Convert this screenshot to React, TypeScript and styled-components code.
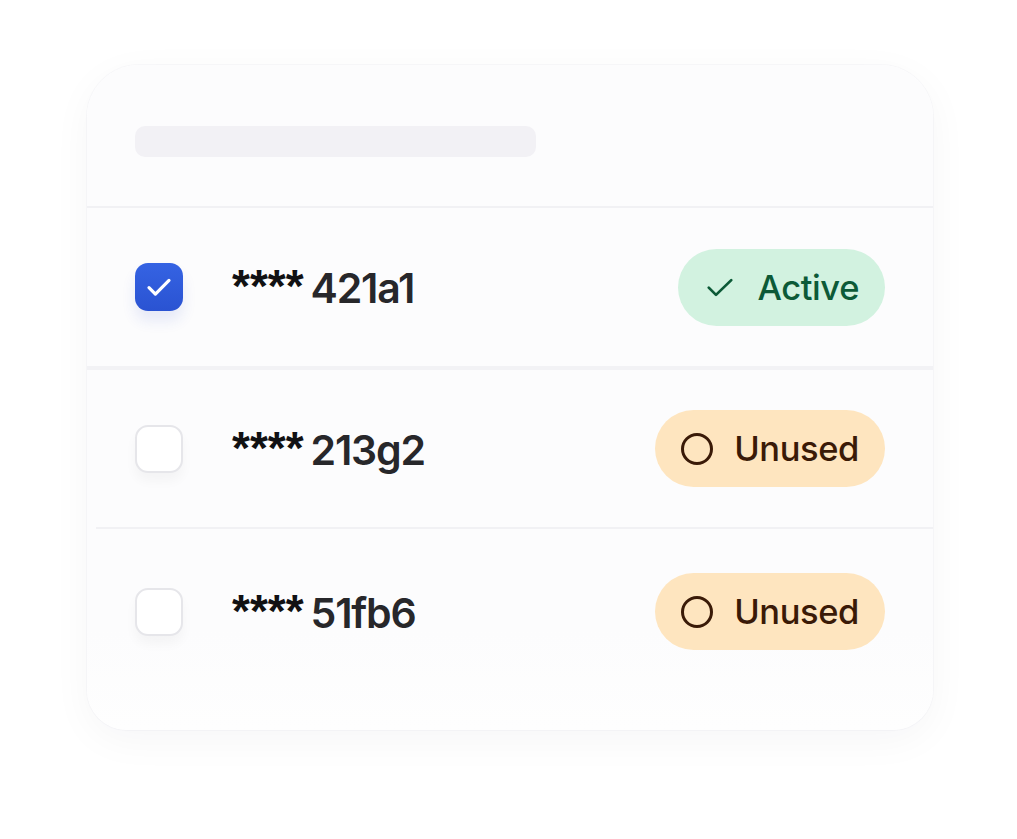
import React from "react";
import styled, { createGlobalStyle } from "styled-components";

const Global = createGlobalStyle`
  html, body { margin: 0; padding: 0; background: #ffffff; }
  body { font-family: "Inter", "Liberation Sans", sans-serif; }
`;

const Page = styled.div`
  width: 1017px;
  height: 839px;
  padding: 65px 0 0 87px;
  box-sizing: border-box;
  background: #ffffff;
`;

const Card = styled.div`
  width: 846px;
  height: 665px;
  box-sizing: border-box;
  border-radius: 52px 52px 40px 40px;
  background: linear-gradient(to bottom, #fcfcfd 0%, #fcfcfd 85%, #fefefe 100%);
  box-shadow: 0 10px 40px rgba(30, 30, 60, 0.04), 0 0 0 1px rgba(242, 242, 246, 0.45);
  display: flex;
  flex-direction: column;
  overflow: hidden;
`;

const Header = styled.div`
  height: 143px;
  flex: 0 0 143px;
  padding: 61px 48px 0;
  box-sizing: border-box;
  border-bottom: 2px solid #f1f1f4;
`;

const Placeholder = styled.div`
  width: 401px;
  height: 31px;
  border-radius: 10px;
  background: #f2f1f5;
`;

type Divider = "full" | "inset" | "none";

const Row = styled.div<{ $divider: Divider }>`
  flex: 0 0 auto;
  display: flex;
  align-items: center;
  box-sizing: border-box;
  position: relative;
  ${(p) =>
    p.$divider === "full"
      ? `height: 162px; padding: 0 48px; border-bottom: 4px solid #f2f2f5;`
      : p.$divider === "inset"
      ? `height: 159px; padding: 0 48px 2px;
         &::after { content: ""; position: absolute; left: 9px; right: 0; bottom: 0; height: 2px; background: #f1f1f4; }`
      : `height: 162px; padding: 3px 48px 0;`}
`;

const Check = styled.div<{ $checked?: boolean }>`
  width: 48px;
  height: 48px;
  flex: 0 0 48px;
  border-radius: 13px;
  box-sizing: border-box;
  display: flex;
  align-items: center;
  justify-content: center;
  ${(p) =>
    p.$checked
      ? `background: linear-gradient(180deg, #3563e3 0%, #2a53d2 100%);
         box-shadow: 0 10px 14px rgba(40, 70, 200, 0.1);`
      : `background: #ffffff;
         border: 2px solid #e6e6ea;
         box-shadow: 0 8px 12px rgba(0, 0, 0, 0.035);`}
`;

const Key = styled.div`
  margin-left: 49px;
  display: flex;
  align-items: baseline;
  flex: 1;
`;

const Stars = styled.span`
  font-family: "Liberation Sans", Arial, sans-serif;
  font-weight: 700;
  font-size: 46px;
  color: #111113;
  margin-right: 7px;
  position: relative;
  top: -1px;
`;

const Digits = styled.span`
  font-family: "Inter", sans-serif;
  font-weight: 600;
  font-size: 41px;
  letter-spacing: -1.2px;
  color: #27272a;
`;

const Badge = styled.div<{ $tone: "green" | "amber" }>`
  height: 77px;
  border-radius: 39px;
  display: flex;
  align-items: center;
  gap: ${(p) => (p.$tone === "green" ? "22px" : "20px")};
  padding: ${(p) => (p.$tone === "green" ? "0 26px 0 27px" : "0 26px 0 25px")};
  box-sizing: border-box;
  background: ${(p) => (p.$tone === "green" ? "#d2f2e0" : "#fee5bf")};
  color: ${(p) => (p.$tone === "green" ? "#0c5a37" : "#3a1a07")};
  font-family: "Inter", sans-serif;
  font-weight: 500;
  font-size: 34.5px;
  letter-spacing: -0.4px;
`;

const rows: { id: string; checked: boolean; status: "Active" | "Unused"; divider: Divider }[] = [
  { id: "421a1", checked: true, status: "Active", divider: "full" },
  { id: "213g2", checked: false, status: "Unused", divider: "inset" },
  { id: "51fb6", checked: false, status: "Unused", divider: "none" },
];

export default function App() {
  return (
    <>
      <Global />
      <Page>
        <Card>
          <Header>
            <Placeholder />
          </Header>
          {rows.map((r) => (
            <Row key={r.id} $divider={r.divider}>
              <Check $checked={r.checked}>
                {r.checked && (
                  <svg width="32" height="32" viewBox="0 0 24 24" fill="none">
                    <path d="M4.5 12.5l4.8 4.8L19.5 7" stroke="#fff" strokeWidth="2.4" strokeLinecap="round" strokeLinejoin="round" />
                  </svg>
                )}
              </Check>
              <Key>
                <Stars>****</Stars>
                <Digits>{r.id}</Digits>
              </Key>
              {r.status === "Active" ? (
                <Badge $tone="green">
                  <svg width="30" height="30" viewBox="0 0 24 24" fill="none">
                    <path d="M3 12.5l5.8 5.8L21 6.5" stroke="#0c5a37" strokeWidth="2.2" strokeLinecap="round" strokeLinejoin="round" />
                  </svg>
                  Active
                </Badge>
              ) : (
                <Badge $tone="amber">
                  <svg width="34" height="34" viewBox="0 0 34 34" fill="none">
                    <circle cx="17" cy="17" r="14.5" stroke="#3a1a07" strokeWidth="3" />
                  </svg>
                  Unused
                </Badge>
              )}
            </Row>
          ))}
        </Card>
      </Page>
    </>
  );
}
